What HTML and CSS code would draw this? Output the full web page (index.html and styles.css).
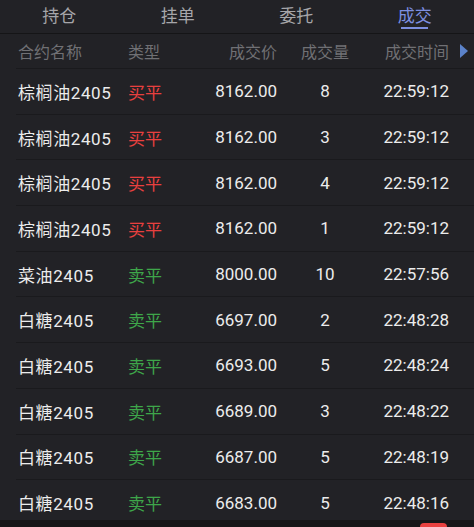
FILE: index.html
```html
<!DOCTYPE html>
<html lang="zh">
<head>
  <meta charset="UTF-8">
  <title>成交</title>
  <link rel="stylesheet" href="styles.css">
</head>
<body>
  <div class="tabs">
    <div class="tab">持仓</div>
    <div class="tab">挂单</div>
    <div class="tab">委托</div>
    <div class="tab active">成交</div>
  </div>
  <div class="row head">
    <div>合约名称</div>
    <div>类型</div>
    <div class="num">成交价</div>
    <div class="qty">成交量</div>
    <div class="num">成交时间</div>
    <div class="more"><span class="arrow"></span></div>
  </div>
  <div id="list"></div>
  <div class="bottom"><span class="pill"></span></div>
  <script>
    const trades = [
      ["棕榈油2405", "买平", "8162.00", 8, "22:59:12"],
      ["棕榈油2405", "买平", "8162.00", 3, "22:59:12"],
      ["棕榈油2405", "买平", "8162.00", 4, "22:59:12"],
      ["棕榈油2405", "买平", "8162.00", 1, "22:59:12"],
      ["菜油2405", "卖平", "8000.00", 10, "22:57:56"],
      ["白糖2405", "卖平", "6697.00", 2, "22:48:28"],
      ["白糖2405", "卖平", "6693.00", 5, "22:48:24"],
      ["白糖2405", "卖平", "6689.00", 3, "22:48:22"],
      ["白糖2405", "卖平", "6687.00", 5, "22:48:19"],
      ["白糖2405", "卖平", "6683.00", 5, "22:48:16"]
    ];

    const list = document.getElementById('list');
    trades.forEach(t => {
      const row = document.createElement('div');
      row.className = 'row';
      row.innerHTML = `
        <div class="name">${t[0]}</div>
        <div class="${t[1] === '买平' ? 'buy' : 'sell'}">${t[1]}</div>
        <div class="num">${t[2]}</div>
        <div class="qty">${t[3]}</div>
        <div class="num">${t[4]}</div>
        <div></div>
      `;
      list.appendChild(row);
    });
  </script>
</body>
</html>
```
FILE: styles.css
```css
body {
  margin: 0;
  height: 527px;
  overflow: hidden;
  background-color: #222226;
  color: #ececec;
  font-family: Roboto, "Noto Sans CJK SC", sans-serif;
}
.tabs {
  display: grid;
  grid-template-columns: repeat(4, 1fr);
  height: 33px;
  border-bottom: 1px solid #151517;
}
.tab {
  font-size: 17px;
  color: #a6a6aa;
  text-align: center;
  line-height: 33px;
  position: relative;
}
.tab.active {
  color: #7d8fe0;
}
.tab.active::after {
  content: "";
  position: absolute;
  left: 50%;
  bottom: 4px;
  width: 27px;
  height: 2px;
  margin-left: -14px;
  background-color: #7d8fe0;
}
.row {
  display: grid;
  grid-template-columns: 110px 60px 89px 96px 76px 1fr;
  align-items: center;
  height: 45.7px;
  margin-left: 16px;
  padding-left: 2px;
  font-size: 17px;
  border-bottom: 1px solid #1a1a1d;
  box-sizing: border-box;
}
.row.head {
  height: 35px;
  font-size: 16px;
  color: #707074;
}
.name {
  letter-spacing: 0.6px;
}
.num {
  text-align: right;
}
.qty {
  text-align: center;
}
.buy {
  color: #e8403f;
}
.sell {
  color: #3ea64a;
}
.more {
  display: flex;
  justify-content: center;
}
.arrow {
  width: 0;
  height: 0;
  border-top: 7px solid transparent;
  border-bottom: 7px solid transparent;
  border-left: 8px solid #5b82c9;
  margin-left: 4px;
}
.bottom {
  position: absolute;
  left: 0;
  top: 520px;
  width: 100%;
  height: 7px;
  background-color: #161618;
}
.pill {
  position: absolute;
  left: 420px;
  top: 3px;
  width: 27px;
  height: 14px;
  border-radius: 4px;
  background-color: #e8403f;
}
```
